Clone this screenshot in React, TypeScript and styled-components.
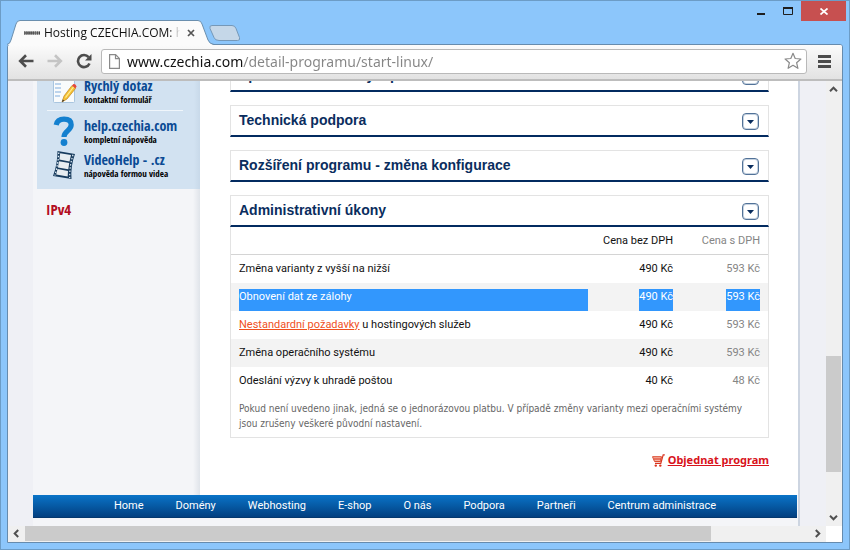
import React from "react";
import styled, { createGlobalStyle } from "styled-components";

const uiFont = `Roboto, "Open Sans", sans-serif`;
const noteFont = `"DejaVu Sans Condensed", "Open Sans", sans-serif`;
const chromeFont = `"Noto Sans", "Open Sans", sans-serif`;
const narrowFont = `"Open Sans Condensed", "Roboto Condensed", "Liberation Sans Narrow", "Noto Sans", sans-serif`;
const headingFont = `"Liberation Sans", Arial, sans-serif`;

const GlobalStyle = createGlobalStyle`
  *, *::before, *::after { box-sizing: border-box; }
  body { margin: 0; font-family: ${uiFont}; font-size: 11px; color: #111; }
  button, input { font: inherit; }
  button { padding: 0; border: 0; background: none; color: inherit; cursor: pointer; }
  svg { display: block; }
`;

const Window = styled.div`
  display: flex;
  flex-direction: column;
  height: 100vh;
  padding: 0 6px 6px;
  border: 1px solid #6c9cc6;
  background: #8cc6fb;
`;

const TitleBar = styled.header`
  display: flex;
  justify-content: space-between;
  align-items: flex-start;
  margin-right: -3px;
`;

const TabStrip = styled.div`
  display: flex;
  align-items: flex-end;
  padding-top: 19px;
`;

const Tab = styled.div`
  display: flex;
  align-items: stretch;
  height: 25px;
  margin-bottom: -1px;
  position: relative;
`;

const TabBody = styled.div`
  display: flex;
  align-items: center;
  width: 178px;
  background: #fbfbfb;
  border-top: 1px solid #6b8fae;
`;

const Favicon = styled.svg`
  flex: none;
  margin: 0 4px 0 4px;
`;

const TabTitle = styled.span`
  flex: 1;
  overflow: hidden;
  white-space: nowrap;
  font-family: "Open Sans", "Noto Sans", sans-serif;
  font-size: 12px;
  line-height: 18px;
  color: #111;
  mask-image: linear-gradient(to right, #000 92%, transparent);
`;

const TabClose = styled.button`
  flex: none;
  width: 14px;
  height: 14px;
  display: grid;
  place-items: center;
  margin-left: 4px;
`;

const NewTab = styled.button`
  margin: 0 0 3px -5px;
`;

const Controls = styled.div`
  display: flex;
`;

const Control = styled.button<{ $close?: boolean }>`
  display: grid;
  place-items: center;
  width: ${(p) => (p.$close ? 45 : 27)}px;
  height: 20px;
  background: ${(p) => (p.$close ? "#c75050" : "transparent")};
`;

const Client = styled.div`
  flex: 1;
  min-height: 0;
  display: flex;
  flex-direction: column;
  border: 1px solid #668bad;
  border-radius: 3px 3px 0 0;
  background: #eff0f5;
`;

const Toolbar = styled.div`
  display: flex;
  align-items: center;
  flex: none;
  gap: 9px;
  height: 36px;
  padding: 0 9px 2px 9px;
  background: linear-gradient(#fbfbfb, #e2e2e2);
  border-bottom: 2px solid #bdbdbd;
  border-radius: 2px 2px 0 0;
`;

const ToolGroup = styled.div`
  display: flex;
  gap: 12px;
`;

const ToolButton = styled.button`
  flex: none;
  display: grid;
  place-items: center;
  width: 17px;
  height: 18px;
`;

const AddressBar = styled.form`
  flex: 1;
  display: flex;
  align-items: center;
  height: 25px;
  padding: 0 4px 0 7px;
  border: 1px solid #b9b9b9;
  border-radius: 3px;
  background: #fff;
`;

const AddressInput = styled.input`
  flex: 1;
  min-width: 0;
  height: 22px;
  padding: 0;
  margin-left: 7px;
  border: 0;
  outline: 0;
  font-family: ${chromeFont};
  font-size: 14px;
  color: transparent;
  caret-color: #111;
  background: linear-gradient(to right, #111 116px, #858585 116px);
  background-clip: text;
`;

const Scroller = styled.div`
  flex: 1;
  min-height: 0;
  display: flex;
`;

const Viewport = styled.div`
  flex: 1;
  min-width: 0;
  overflow: hidden;
`;

const Page = styled.div`
  margin: -21px 26px 0 25px;
  padding-right: 1px;
  padding-bottom: 40px;
  background: #f4f5f8;
  border-right: 2px solid #cdd5e1;
`;

const Columns = styled.div`
  display: flex;
  margin-right: -1px;
  background: #fff;
`;

const Sidebar = styled.aside`
  flex: none;
  width: 167px;
  padding-left: 4px;
  background: linear-gradient(to right, #f4f5f8 160px, #e0e4ea);
`;

const HelpBox = styled.div`
  padding: 17px 17px 10px 10px;
  background: linear-gradient(to right, #d2e2f1 157px, #c8d9e9);
`;

const HelpLink = styled.a`
  display: flex;
  align-items: center;
  height: 28px;
  margin-bottom: 6px;
  color: #000;
  text-decoration: none;
  white-space: nowrap;
  &:last-child { margin-bottom: 0; }
`;

const HelpIcon = styled.span`
  flex: none;
  width: 34px;
  margin-right: 3px;
  display: grid;
  place-items: center;
`;

const HelpTitle = styled.strong`
  display: block;
  font: bold 14px/18px ${narrowFont};
  color: #0a4a94;
`;

const HelpNote = styled.strong`
  display: block;
  font: bold 9px/10px ${narrowFont};
`;

const Divider = styled.hr`
  height: 1px;
  margin: -1px 0 6px;
  border: 0;
  background: #f0f6fb;
`;

const Ipv4 = styled.strong`
  display: block;
  padding: 11px 9px;
  font: bold 15px/18px ${narrowFont};
  color: #b30d22;
`;

const Main = styled.main`
  flex: 1;
  min-width: 0;
  padding: 0 29px 0 30px;
`;

const PanelHeader = styled.div`
  display: flex;
  align-items: center;
  justify-content: space-between;
  height: 32px;
  margin-bottom: 13px;
  padding: 0 9px 0 8px;
  border: 1px solid #e3e3e3;
  border-bottom: 2px solid #032b60;
`;

const PanelTitle = styled.h2`
  margin: 0;
  padding-bottom: 2px;
  font: bold 14px/18px ${headingFont};
  color: #0a2d5e;
`;

const Toggle = styled.button`
  display: grid;
  place-items: center;
  width: 17px;
  height: 17px;
  margin-top: 2px;
  border: 1px solid #527298;
  border-radius: 4px;
  box-shadow: inset 0 0 0 1px #c6d3e1;
  background: #fff;
`;

const PanelBody = styled.div`
  margin-top: -13px;
  padding-bottom: 6px;
  border: 1px solid #e3e3e3;
  border-top: 0;
`;

const PriceTable = styled.table`
  width: 100%;
  table-layout: fixed;
  border-collapse: separate;
  border-spacing: 0;
  font-size: 11px;
  line-height: 16px;
`;

const NameCol = styled.col``;
const PriceCol = styled.col` width: 85px; `;
const TotalCol = styled.col` width: 95px; `;

const HeadCell = styled.th<{ $muted?: boolean }>`
  height: 28px;
  padding: 0 ${(p) => (p.$muted ? 8 : 0)}px 0 0;
  border-bottom: 1px solid #d4d4d4;
  font-weight: normal;
  text-align: right;
  color: ${(p) => (p.$muted ? "#858585" : "#111")};
`;

const Row = styled.tr<{ $shaded: boolean }>`
  background: ${(p) => (p.$shaded ? "#f3f3f3" : "#fff")};
`;

const Cell = styled.td<{ $kind: "name" | "price" | "total" }>`
  height: 28px;
  padding: 6px ${(p) => (p.$kind === "total" ? 8 : 0)}px 0 ${(p) => (p.$kind === "name" ? 8 : 0)}px;
  text-align: ${(p) => (p.$kind === "name" ? "left" : "right")};
  color: ${(p) => (p.$kind === "total" ? "#858585" : "#111")};
`;

const Mark = styled.span<{ $selected: boolean; $wide?: boolean }>`
  display: ${(p) => (p.$wide ? "block" : "inline-block")};
  height: 22px;
  vertical-align: top;
  background: ${(p) => (p.$selected ? "#3297fd" : "transparent")};
  color: ${(p) => (p.$selected ? "#fff" : "inherit")};
`;

const OrangeLink = styled.a`
  color: #f0501e;
`;

const Note = styled.p`
  margin: 0;
  padding: 6px 8px 0 8px;
  font-family: ${noteFont};
  font-size: 10px;
  line-height: 15px;
  color: #666;
`;

const OrderLine = styled.div`
  display: flex;
  justify-content: flex-end;
  align-items: center;
  gap: 3px;
  padding: 14px 0 27px;
  font-size: 11px;
  font-weight: bold;
  line-height: 16px;
`;

const OrderLink = styled.a`
  font-family: ${chromeFont};
  color: #d8131b;
`;

const FooterNav = styled.nav`
  display: flex;
  flex-wrap: wrap;
  justify-content: center;
  align-items: center;
  gap: 0 32px;
  min-height: 23px;
  background: linear-gradient(#0a74c8, #023f80);
  border-bottom: 1px solid #04376e;
`;

const FooterLink = styled.a`
  color: #fff;
  font-size: 11px;
  line-height: 22px;
  text-decoration: none;
`;

const VerticalBar = styled.div`
  flex: none;
  display: flex;
  flex-direction: column;
  width: 16px;
  padding-right: 1px;
  background: #f0f0f0;
`;

const HorizontalBar = styled.div`
  flex: none;
  display: flex;
  height: 16px;
  padding-bottom: 1px;
  background: #f0f0f0;
`;

const BarButton = styled.button`
  flex: none;
  display: grid;
  place-items: center;
  width: 17px;
  height: 15px;
`;

const BarButtonV = styled(BarButton)`
  width: 15px;
  height: 17px;
`;

const Gap = styled.div<{ $grow: number }>`
  flex: ${(p) => p.$grow} 1 0;
`;

const Thumb = styled.div<{ $grow: number }>`
  flex: ${(p) => p.$grow} 1 0;
  background: #cbcbcb;
`;

const Corner = styled.div`
  width: 16px;
  margin-bottom: -1px;
  background: #fff;
`;

const StarButton = styled.button`
  flex: none;
`;

const Chevron = ({ turn }: { turn: number }) => (
  <svg width="9" height="9" viewBox="0 0 9 9" aria-hidden="true">
    <path d="M1 6.2 4.5 2.7 8 6.2" fill="none" stroke="#505050" strokeWidth="2" transform={`rotate(${turn} 4.5 4.5)`} />
  </svg>
);

const NoteIcon = () => (
  <svg width="25" height="26" viewBox="0 0 25 26" aria-hidden="true">
    <rect x="1.5" y="1.5" width="21" height="23" rx="1" fill="#f9fbfc" stroke="#a9c5df" />
    <path d="M3 6h6M3 10h6M3 14h6M3 18h5" stroke="#a8c8e8" strokeWidth="1.6" />
    <path d="M10 24 12 18 20 7.500 23.500 10.500 15 21Z" fill="#f6c234" stroke="#bf8524" strokeWidth=".7" />
    <path d="m13.500 19.500 8-10.500" stroke="#fff09a" strokeWidth="1.200" />
    <path d="m20 7.500 1.500-1.500q2.500-.500 3 2.500l-1 2Z" fill="#e5483d" />
    <path d="m10 24 .7-2.500 1.700 1.200Z" fill="#333" />
  </svg>
);

const QuestionIcon = () => (
  <svg width="22" height="32" viewBox="0 0 22 32" aria-hidden="true">
    <path d="M3.200 10C4 5.800 7 4.200 11 4.200c4.800 0 7.200 2.200 7.200 5.600 0 6-7.200 5.800-7.200 12.200" fill="none" stroke="#1480cf" strokeWidth="5.200" />
    <circle cx="11" cy="27.500" r="3.400" fill="#1480cf" />
  </svg>
);

const FilmIcon = () => (
  <svg width="24" height="30" viewBox="0 0 24 30" aria-hidden="true">
    <path d="M5.500 1 23 4Q18.500 16 19.500 29L1 26Q5.500 14 5.500 1Z" fill="#173b5d" />
    <path d="m8.200 3.200 10.800 1.900-1.500 6.300L7.300 9.600ZM7 11.200l10.200 1.800-.9 6.200L5.900 17.400ZM5.500 19l10.500 1.900-.3 5.700L4.200 24.600Z" fill="#e7edf1" />
    <path d="M6.800 2.500Q6 15 2.800 25.500M21 4.800Q17.500 16 17.700 28" fill="none" stroke="#e7f2fb" strokeWidth="1.200" strokeDasharray="1.500 1.700" />
  </svg>
);

const CartIcon = () => (
  <svg width="13" height="13" viewBox="0 0 13 13" aria-hidden="true">
    <path d="M.5 2.700h9L8.500 7.500H2.500Z" fill="#f6b3a2" stroke="#dc4b30" />
    <path d="M12.800.8h-1.600L8.800 9.300H3M2 5h7" fill="none" stroke="#d9341f" strokeWidth="1.200" />
    <circle cx="3.800" cy="11.600" r="1.200" fill="#d9341f" />
    <circle cx="8.300" cy="11.600" r="1.200" fill="#d9341f" />
  </svg>
);

const Panel = ({ title }: { title: string }) => (
  <PanelHeader>
    <PanelTitle>{title}</PanelTitle>
    <Toggle type="button" aria-label={title}>
      <svg width="7" height="4" viewBox="0 0 7 4" aria-hidden="true">
        <path d="M0 0h7L3.500 4Z" fill="#0a2d5e" />
      </svg>
    </Toggle>
  </PanelHeader>
);

type Item = { name: React.ReactNode; price: string; total: string; selected?: boolean };

const items: Item[] = [
  { name: "Změna varianty z vyšší na nižší", price: "490 Kč", total: "593 Kč" },
  { name: "Obnovení dat ze zálohy", price: "490 Kč", total: "593 Kč", selected: true },
  {
    name: (
      <>
        <OrangeLink href="#pozadavky">Nestandardní požadavky</OrangeLink> u hostingových služeb
      </>
    ),
    price: "490 Kč",
    total: "593 Kč",
  },
  { name: "Změna operačního systému", price: "490 Kč", total: "593 Kč" },
  { name: "Odeslání výzvy k uhradě poštou", price: "40 Kč", total: "48 Kč" },
];

const helpLinks = [
  { title: "Rychlý dotaz", note: "kontaktní formulář", icon: <NoteIcon /> },
  { title: "help.czechia.com", note: "kompletní nápověda", icon: <QuestionIcon /> },
  { title: "VideoHelp - .cz", note: "nápověda formou videa", icon: <FilmIcon /> },
];

const footerLinks = ["Home", "Domény", "Webhosting", "E-shop", "O nás", "Podpora", "Partneři", "Centrum administrace"];

export default function App() {
  return (
    <Window>
      <GlobalStyle />
      <TitleBar>
        <TabStrip>
          <Tab>
            <svg width="13" height="25" viewBox="0 0 13 25" aria-hidden="true">
              <path d="M0 25Q3 24 4 20L9 4Q10 .5 13 .5V25Z" fill="#fbfbfb" />
              <path d="M0 24.500Q3 24 4 20L9 4Q10 .5 13 .5" fill="none" stroke="#6b8fae" />
            </svg>
            <TabBody>
              <Favicon width="16" height="12" viewBox="0 0 16 12" aria-hidden="true">
                <path d="M0 6h16" stroke="#111" strokeWidth="3" strokeDasharray="1.600 .5" />
                <path d="M0 6h16" stroke="#fff" strokeWidth=".7" strokeDasharray="1 1.200" />
              </Favicon>
              <TabTitle>Hosting CZECHIA.COM: hosting</TabTitle>
              <TabClose type="button" aria-label="Zavřít kartu">
                <svg width="8" height="8" viewBox="0 0 8 8" aria-hidden="true">
                  <path d="m1 1 6 6M7 1 1 7" stroke="#555" strokeWidth="1.700" />
                </svg>
              </TabClose>
            </TabBody>
            <svg width="16" height="25" viewBox="0 0 16 25" aria-hidden="true">
              <path d="M0 .5Q3 .5 4 4l6 16q1.500 4 6 5H0Z" fill="#fbfbfb" />
              <path d="M0 .5Q3 .5 4 4l6 16q1.500 4 6 4.500" fill="none" stroke="#6b8fae" />
            </svg>
          </Tab>
          <NewTab type="button" aria-label="Nová karta">
            <svg width="32" height="16" viewBox="0 0 32 16" aria-hidden="true">
              <path d="M3 .5h20q3 0 4 3l3.500 9q1 3-2 3H10q-4 0-5-3L1 3.500Q0 .5 3 .5Z" fill="#c5d7e8" stroke="#7598b8" />
            </svg>
          </NewTab>
        </TabStrip>
        <Controls>
          <Control type="button" aria-label="Minimalizovat">
            <svg width="8" height="12" viewBox="0 0 8 12" aria-hidden="true">
              <path d="M0 9h8" stroke="#1e1e1e" strokeWidth="2" />
            </svg>
          </Control>
          <Control type="button" aria-label="Maximalizovat">
            <svg width="10" height="8" viewBox="0 0 10 8" aria-hidden="true">
              <path d="M.5 1v6.500h9V1" fill="none" stroke="#1e1e1e" />
              <path d="M0 1h10" stroke="#1e1e1e" strokeWidth="2" />
            </svg>
          </Control>
          <Control type="button" aria-label="Zavřít" $close>
            <svg width="8" height="7" viewBox="0 0 8 7" aria-hidden="true">
              <path d="m.5.5 7 6M7.500.5l-7 6" stroke="#fff" strokeWidth="1.700" />
            </svg>
          </Control>
        </Controls>
      </TitleBar>
      <Client>
        <Toolbar>
          <ToolGroup>
            <ToolButton type="button" aria-label="Zpět">
              <svg width="16" height="14" viewBox="0 0 16 14" aria-hidden="true">
                <path d="M15.500 7H2.500M8 1.300 2.200 7 8 12.700" fill="none" stroke="#4c4c4c" strokeWidth="2.600" />
              </svg>
            </ToolButton>
            <ToolButton type="button" aria-label="Vpřed">
              <svg width="16" height="14" viewBox="0 0 16 14" aria-hidden="true">
                <path d="M.5 7h13M8 1.300 13.800 7 8 12.700" fill="none" stroke="#c4c4c4" strokeWidth="2.600" />
              </svg>
            </ToolButton>
            <ToolButton type="button" aria-label="Obnovit">
              <svg width="16" height="16" viewBox="0 0 16 16" aria-hidden="true">
                <path d="M12.600 4.200A6 6 0 1 0 13.500 10.500" fill="none" stroke="#4c4c4c" strokeWidth="2.600" />
                <path d="M15.500 1v6.500H9Z" fill="#4c4c4c" />
              </svg>
            </ToolButton>
          </ToolGroup>
          <AddressBar onSubmit={(e) => e.preventDefault()}>
            <svg width="11" height="15" viewBox="0 0 11 15" aria-hidden="true">
              <path d="M.6.600h6L10.400 4.500v9.900H.6ZM6.500.600v4h4" fill="#fff" stroke="#8a8a8a" strokeWidth="1.200" />
            </svg>
            <AddressInput aria-label="Adresa" defaultValue="www.czechia.com/detail-programu/start-linux/" />
            <StarButton type="button" aria-label="Přidat záložku">
              <svg width="18" height="18" viewBox="0 0 18 18" aria-hidden="true">
                <path d="m9 1.300 2.200 5.200 5.700.5-4.300 3.700 1.300 5.600L9 13.300l-4.900 3 1.300-5.600L1.100 7l5.700-.5Z" fill="#fff" stroke="#8a8a8a" strokeWidth="1.200" strokeLinejoin="round" />
              </svg>
            </StarButton>
          </AddressBar>
          <ToolButton type="button" aria-label="Nabídka">
            <svg width="13" height="13" viewBox="0 0 13 13" aria-hidden="true">
              <path d="M0 1.500h13M0 6.500h13M0 11.500h13" stroke="#4c4c4c" strokeWidth="2.800" />
            </svg>
          </ToolButton>
        </Toolbar>
        <Scroller>
          <Viewport>
            <Page>
              <Columns>
                <Sidebar>
                  <HelpBox>
                    {helpLinks.map((link, i) => (
                      <React.Fragment key={link.title}>
                        {i === 1 && <Divider />}
                        <HelpLink href="#pomoc">
                          <HelpIcon>{link.icon}</HelpIcon>
                          <span>
                            <HelpTitle>{link.title}</HelpTitle>
                            <HelpNote>{link.note}</HelpNote>
                          </span>
                        </HelpLink>
                      </React.Fragment>
                    ))}
                  </HelpBox>
                  <Ipv4>IPv4</Ipv4>
                </Sidebar>
                <Main>
                  <Panel title="Specifikace a normy a plnění" />
                  <Panel title="Technická podpora" />
                  <Panel title="Rozšíření programu - změna konfigurace" />
                  <Panel title="Administrativní úkony" />
                  <PanelBody>
                    <PriceTable>
                      <colgroup>
                        <NameCol />
                        <PriceCol />
                        <TotalCol />
                      </colgroup>
                      <thead>
                        <tr>
                          <HeadCell aria-label="Služba" />
                          <HeadCell scope="col">Cena bez DPH</HeadCell>
                          <HeadCell scope="col" $muted>Cena s DPH</HeadCell>
                        </tr>
                      </thead>
                      <tbody>
                        {items.map((item, i) => (
                          <Row key={i} $shaded={i % 2 === 1}>
                            <Cell $kind="name">
                              <Mark $selected={!!item.selected} $wide>{item.name}</Mark>
                            </Cell>
                            <Cell $kind="price">
                              <Mark $selected={!!item.selected}>{item.price}</Mark>
                            </Cell>
                            <Cell $kind="total">
                              <Mark $selected={!!item.selected}>{item.total}</Mark>
                            </Cell>
                          </Row>
                        ))}
                      </tbody>
                    </PriceTable>
                    <Note>
                      Pokud není uvedeno jinak, jedná se o jednorázovou platbu. V případě změny varianty mezi operačními systémy jsou zrušeny veškeré původní nastavení.
                    </Note>
                  </PanelBody>
                  <OrderLine>
                    <CartIcon />
                    <OrderLink href="#objednat">Objednat program</OrderLink>
                  </OrderLine>
                </Main>
              </Columns>
              <FooterNav>
                {footerLinks.map((label) => (
                  <FooterLink key={label} href="#menu">{label}</FooterLink>
                ))}
              </FooterNav>
            </Page>
          </Viewport>
          <VerticalBar>
            <BarButtonV type="button" aria-label="Nahoru"><Chevron turn={0} /></BarButtonV>
            <Gap $grow={258} />
            <Thumb $grow={116} />
            <Gap $grow={37} />
            <BarButtonV type="button" aria-label="Dolů"><Chevron turn={180} /></BarButtonV>
          </VerticalBar>
        </Scroller>
        <HorizontalBar>
          <BarButton type="button" aria-label="Vlevo"><Chevron turn={-90} /></BarButton>
          <Thumb $grow={686} />
          <Gap $grow={98} />
          <BarButton type="button" aria-label="Vpravo"><Chevron turn={90} /></BarButton>
          <Corner />
        </HorizontalBar>
      </Client>
    </Window>
  );
}
